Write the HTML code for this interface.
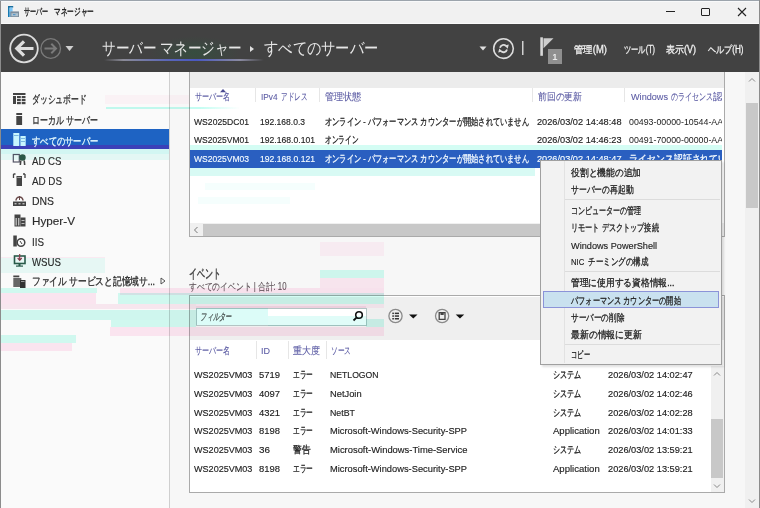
<!DOCTYPE html>
<html><head><meta charset="utf-8">
<style>
*{margin:0;padding:0;box-sizing:border-box}
html,body{width:760px;height:508px;overflow:hidden;background:#f7f7f7}
body{font-family:"Liberation Sans",sans-serif;position:relative;color:#333}
.a{position:absolute;white-space:nowrap}
.fit{overflow:visible}
.fit span{display:inline-block;transform-origin:0 50%}
#win{position:absolute;left:0;top:0;width:760px;height:508px;overflow:hidden;background:#f7f7f7}
</style></head><body>
<div id="win">
<div class="a" style="left:1px;top:1px;width:758px;height:23px;background:#f1f1f1;"></div>
<div class="a" style="left:1px;top:1px;width:758px;height:1px;background:#f8f9fa;"></div>
<div class="a" style="left:1px;top:23px;width:758px;height:1px;background:#fafafa;"></div>
<svg class="a" style="left:7px;top:5px" width="14" height="14" viewBox="0 0 14 14">
<rect x="1" y="1" width="1.6" height="11" fill="#1779b0"/><rect x="1" y="1" width="5.2" height="1.6" fill="#1a6e9e"/>
<rect x="2.6" y="2.6" width="3" height="4.2" fill="#7cc6f6"/><rect x="2.6" y="6.8" width="1.2" height="5.2" fill="#4aa6e4"/>
<rect x="3.4" y="6.4" width="8.6" height="5.6" fill="#7e8e9c"/><rect x="4.4" y="8.2" width="6.6" height="3" fill="#aec2d0"/><rect x="6" y="9" width="2.5" height="1.2" fill="#5a98c8"/></svg>
<div class="a fit" style="left:24.2px;top:5.10px;width:24.2px;height:14px;line-height:14px;font-size:10px;color:#1a1a1a;-webkit-text-stroke:0.35px currentColor"><span>サーバー</span></div>
<div class="a fit" style="left:54.2px;top:5.10px;width:40px;height:14px;line-height:14px;font-size:10px;color:#1a1a1a;-webkit-text-stroke:0.35px currentColor"><span>マネージャー</span></div>
<div class="a" style="left:666px;top:11px;width:9px;height:1px;background:#222;"></div>
<div class="a" style="left:701px;top:8px;width:9px;height:8px;background:transparent;border:1px solid #222;border-radius:1px"></div>
<svg class="a" style="left:737px;top:7px" width="10" height="10" viewBox="0 0 10 10"><path d="M1 1L9 9M9 1L1 9" stroke="#222" stroke-width="1.1"/></svg>
<div class="a" style="left:1px;top:24px;width:758px;height:48px;background:#424242;"></div>
<svg class="a" style="left:8px;top:32px" width="70" height="34" viewBox="0 0 70 34">
<circle cx="16" cy="16.5" r="13.8" fill="none" stroke="#dcdcdc" stroke-width="1.8"/>
<path d="M9 16.5H25.5M16 9.3L8.8 16.5L16 23.7" fill="none" stroke="#dedede" stroke-width="3.2"/>
<circle cx="42.7" cy="16.5" r="9.8" fill="none" stroke="#7a7a7a" stroke-width="1.3"/>
<path d="M36.5 16.5H48M43.3 11.8L48 16.5L43.3 21.2" fill="none" stroke="#7a7a7a" stroke-width="2"/>
<path d="M57.5 14H65.5L61.5 19Z" fill="#d0d0d0"/></svg>
<div class="a" style="left:150px;top:36px;width:90px;height:24px;background:radial-gradient(ellipse at 50% 70%,rgba(40,90,60,.45),rgba(40,90,60,0) 70%);"></div>
<div class="a" style="left:104px;top:58.6px;width:160px;height:2.8px;background:linear-gradient(90deg,rgba(140,140,150,0) 0%,#8a8a96 12%,#5a66b8 40%,#4a58c0 58%,#8a8aa0 85%,rgba(140,140,150,0) 100%);filter:blur(0.4px)"></div>
<div class="a fit" style="left:102px;top:37.00px;width:140px;height:24px;line-height:24px;font-size:17px;color:#e6e6e6;-webkit-text-stroke:0"><span>サーバー マネージャー</span></div>
<svg class="a" style="left:249px;top:45px" width="6" height="8"><path d="M1 1L5 4L1 7Z" fill="#e0e0e0"/></svg>
<div class="a fit" style="left:264px;top:37.00px;width:114px;height:24px;line-height:24px;font-size:17px;color:#e6e6e6;-webkit-text-stroke:0"><span>すべてのサーバー</span></div>
<svg class="a" style="left:478px;top:36px" width="90" height="30" viewBox="0 0 90 30">
<path d="M1.5 10.5H8.5L5 14.5Z" fill="#e0e0e0"/>
<circle cx="25.5" cy="12.6" r="9.8" fill="none" stroke="#dcdcdc" stroke-width="1.6"/>
<path d="M22.0 11.7A3.6 3.6 0 0 1 28.0 10.0M29.0 13.5A3.6 3.6 0 0 1 23.0 15.2" fill="none" stroke="#dcdcdc" stroke-width="1.8"/>
<path d="M26.6 9.6L30.8 8.6L29.7 12.8Z M24.4 15.6L20.2 16.6L21.3 12.4Z" fill="#dcdcdc"/>
<rect x="44" y="5" width="1.5" height="14" fill="#d0d0d0"/>
<rect x="62.3" y="1.3" width="2.6" height="18.5" fill="#d8d8d8"/>
<path d="M65.5 2.3H75.5L65.5 12.3Z" fill="#cdcdcd"/></svg>
<div class="a" style="left:548px;top:49px;width:14px;height:15px;background:#8f8f8f;"></div>
<div class="a" style="left:548px;top:50.30px;height:13px;line-height:13px;font-size:9.5px;color:#f4f4f4;width:14px;text-align:center;-webkit-text-stroke:0.15px currentColor"><span>1</span></div>
<div class="a fit" style="left:574px;top:42.50px;width:33px;height:14px;line-height:14px;font-size:10px;color:#f0f0f0;;-webkit-text-stroke:0.3px currentColor"><span>管理(M)</span></div>
<div class="a fit" style="left:623.6px;top:42.50px;width:31px;height:14px;line-height:14px;font-size:10px;color:#f0f0f0;;-webkit-text-stroke:0.3px currentColor"><span>ツール(T)</span></div>
<div class="a fit" style="left:666.3px;top:42.50px;width:30px;height:14px;line-height:14px;font-size:10px;color:#f0f0f0;;-webkit-text-stroke:0.3px currentColor"><span>表示(V)</span></div>
<div class="a fit" style="left:707.8px;top:42.50px;width:35.5px;height:14px;line-height:14px;font-size:10px;color:#f0f0f0;;-webkit-text-stroke:0.3px currentColor"><span>ヘルプ(H)</span></div>
<div class="a" style="left:1px;top:72px;width:168px;height:436px;background:#fafafa;"></div>
<div class="a" style="left:169px;top:72px;width:1px;height:436px;background:#cfcfcf;"></div>
<div class="a" style="left:1px;top:129px;width:168px;height:16px;background:#1e63c3;"></div>
<div class="a" style="left:1px;top:145px;width:168px;height:4px;background:#3b40b8;"></div>
<div class="a fit" style="left:32.4px;top:92.20px;width:54.5px;height:15px;line-height:15px;font-size:11px;color:#2b2b2b;;-webkit-text-stroke:0.3px currentColor"><span>ダッシュボード</span></div>
<div class="a fit" style="left:32.4px;top:113.00px;width:65.6px;height:15px;line-height:15px;font-size:11px;color:#2b2b2b;;-webkit-text-stroke:0.3px currentColor"><span>ローカル サーバー</span></div>
<div class="a fit" style="left:32.4px;top:133.70px;width:66px;height:15px;line-height:15px;font-size:11px;color:#e8fbff;;-webkit-text-stroke:0.3px currentColor"><span>すべてのサーバー</span></div>
<div class="a fit" style="left:32.4px;top:153.70px;width:29.5px;height:15px;line-height:15px;font-size:11px;color:#2b2b2b;;-webkit-text-stroke:0.15px currentColor"><span>AD CS</span></div>
<div class="a fit" style="left:32.4px;top:173.70px;width:30px;height:15px;line-height:15px;font-size:11px;color:#2b2b2b;;-webkit-text-stroke:0.15px currentColor"><span>AD DS</span></div>
<div class="a fit" style="left:32.4px;top:194.20px;width:22px;height:15px;line-height:15px;font-size:11px;color:#2b2b2b;;-webkit-text-stroke:0.15px currentColor"><span>DNS</span></div>
<div class="a fit" style="left:32.4px;top:214.40px;width:43px;height:15px;line-height:15px;font-size:11px;color:#2b2b2b;;-webkit-text-stroke:0.15px currentColor"><span>Hyper-V</span></div>
<div class="a fit" style="left:32.4px;top:234.70px;width:12px;height:15px;line-height:15px;font-size:11px;color:#2b2b2b;;-webkit-text-stroke:0.15px currentColor"><span>IIS</span></div>
<div class="a fit" style="left:32.4px;top:255.40px;width:29px;height:15px;line-height:15px;font-size:11px;color:#2b2b2b;;-webkit-text-stroke:0.15px currentColor"><span>WSUS</span></div>
<div class="a fit" style="left:32.4px;top:274.20px;width:123px;height:15px;line-height:15px;font-size:11px;color:#2b2b2b;;-webkit-text-stroke:0.3px currentColor"><span>ファイル サービスと記憶域サ...</span></div>
<svg class="a" style="left:12px;top:92px" width="15" height="200" viewBox="0 0 15 200">
<rect x="1" y="1" width="12.5" height="2" fill="#444"/>
<rect x="1" y="4" width="3" height="8" fill="#444"/>
<rect x="5" y="4" width="3.8" height="2.2" fill="#444"/><rect x="9.7" y="4" width="3.8" height="2.2" fill="#444"/>
<rect x="5" y="7" width="3.8" height="2.2" fill="#444"/><rect x="9.7" y="7" width="3.8" height="2.2" fill="#444"/>
<rect x="5" y="10" width="3.8" height="2.2" fill="#444"/><rect x="9.7" y="10" width="3.8" height="2.2" fill="#444"/>
<rect x="4.3" y="21" width="5.8" height="2" fill="#444"/>
<rect x="4.3" y="24" width="5.8" height="9" fill="#444"/>
<rect x="1.3" y="41" width="6" height="13" fill="#c8f6ff"/><rect x="8.4" y="44" width="5.3" height="10" fill="#c8f6ff"/>
<rect x="2" y="43" width="4.6" height="1" fill="#7ab8e0"/><rect x="9" y="46" width="4" height="1" fill="#7ab8e0"/><rect x="9" y="49" width="4" height="1" fill="#7ab8e0"/>
<rect x="1.3" y="62.5" width="6" height="7.5" fill="none" stroke="#556" stroke-width="1.2"/>
<circle cx="10.5" cy="65.5" r="3.2" fill="#2f5a48"/><path d="M8.8 68.5L8.3 73M12.2 68.5L12.7 73" stroke="#444" stroke-width="1.6"/>
<path d="M1.5 82V86M1.5 82H3.5M13 82V86M13 82H11" stroke="#444" stroke-width="1.3" fill="none"/>
<rect x="4.5" y="84" width="5.5" height="10" fill="#444"/><rect x="5.2" y="85" width="4" height="1" fill="#999"/>
<path d="M4 108.5A3.5 3.5 0 0 1 11 108.5" fill="none" stroke="#6a4a4a" stroke-width="1.5"/><rect x="7" y="104" width="1" height="4" fill="#6a4a4a"/>
<rect x="1" y="109.5" width="13" height="4.5" fill="#444"/><rect x="2.5" y="111" width="2" height="1.4" fill="#bbb"/><rect x="6.5" y="111" width="2" height="1.4" fill="#bbb"/><rect x="10.5" y="111" width="2" height="1.4" fill="#bbb"/>
<rect x="2.5" y="122.5" width="6" height="12" fill="#444"/><rect x="8.5" y="125.5" width="5" height="9" fill="#444"/>
<rect x="3.5" y="126" width="1.4" height="7.5" fill="#bbb"/><rect x="6" y="126" width="1.4" height="7.5" fill="#bbb"/><rect x="9.5" y="128" width="3" height="1" fill="#bbb"/><rect x="9.5" y="131" width="3" height="1" fill="#bbb"/>
<rect x="1.3" y="143.5" width="3.5" height="11" fill="#444"/>
<circle cx="9" cy="150.5" r="3.8" fill="none" stroke="#444" stroke-width="1.5"/><path d="M8 149L10 152" stroke="#444" stroke-width="1"/>
<rect x="2.5" y="164" width="10.5" height="7.5" fill="none" stroke="#2a5a4a" stroke-width="1.6"/><rect x="6.5" y="172" width="2" height="2" fill="#2a5a4a"/><rect x="4" y="173.5" width="7" height="1.2" fill="#2a5a4a"/>
<path d="M7.7 162V168M5.7 166L7.7 168.3L9.7 166" stroke="#8a3a4a" stroke-width="1.2" fill="none"/>
<rect x="1.3" y="183.5" width="6" height="1.8" fill="#444"/><rect x="1.3" y="186" width="8" height="9" fill="#666"/>
<rect x="8" y="188" width="5.5" height="8" fill="#333"/><rect x="9" y="189" width="3.5" height="1" fill="#999"/>
</svg>
<svg class="a" style="left:160px;top:277px" width="6" height="8"><path d="M1 1L5 4L1 7Z" fill="none" stroke="#444" stroke-width="0.9"/></svg>
<div class="a" style="left:189px;top:72px;width:536px;height:165px;background:#fff;border:1px solid #aaa;border-top:none"></div>
<div class="a" style="left:190px;top:72px;width:534px;height:16px;background:#ececec;"></div>
<div class="a" style="left:255px;top:88px;width:1px;height:14px;background:#e6e6e6;"></div>
<div class="a" style="left:319px;top:88px;width:1px;height:14px;background:#e6e6e6;"></div>
<div class="a" style="left:532px;top:88px;width:1px;height:14px;background:#e6e6e6;"></div>
<div class="a" style="left:624px;top:88px;width:1px;height:14px;background:#e6e6e6;"></div>
<div class="a" style="left:0;top:0;width:722px;height:508px;overflow:hidden">
<div class="a fit" style="left:194.8px;top:90.00px;width:35.5px;height:14px;line-height:14px;font-size:9.8px;color:#5c5ca4;-webkit-text-stroke:0.1px currentColor"><span>サーバー名</span></div>
<div class="a fit" style="left:261.1px;top:90.00px;width:16.5px;height:14px;line-height:14px;font-size:9.8px;color:#5c5ca4;-webkit-text-stroke:0.1px currentColor"><span>IPv4</span></div>
<div class="a fit" style="left:280.9px;top:90.00px;width:26px;height:14px;line-height:14px;font-size:9.8px;color:#5c5ca4;-webkit-text-stroke:0.1px currentColor"><span>アドレス</span></div>
<div class="a fit" style="left:325.1px;top:90.00px;width:36.3px;height:14px;line-height:14px;font-size:9.8px;color:#5c5ca4;-webkit-text-stroke:0.1px currentColor"><span>管理状態</span></div>
<div class="a fit" style="left:538.3px;top:90.00px;width:44px;height:14px;line-height:14px;font-size:9.8px;color:#5c5ca4;-webkit-text-stroke:0.1px currentColor"><span>前回の更新</span></div>
<div class="a fit" style="left:630.9px;top:90.00px;width:37px;height:14px;line-height:14px;font-size:9.8px;color:#5c5ca4;-webkit-text-stroke:0.1px currentColor"><span>Windows</span></div>
<div class="a fit" style="left:670.6px;top:90.00px;width:42px;height:14px;line-height:14px;font-size:9.8px;color:#5c5ca4;-webkit-text-stroke:0.1px currentColor"><span>のライセンス</span></div>
<div class="a fit" style="left:712.6px;top:90.00px;width:19px;height:14px;line-height:14px;font-size:9.8px;color:#5c5ca4;-webkit-text-stroke:0.1px currentColor"><span>認証</span></div>
</div>
<svg class="a" style="left:219.5px;top:88.5px" width="6" height="4"><path d="M0 3.3L3 0L6 3.3Z" fill="#4a4a90"/></svg>
<div class="a" style="left:190px;top:150px;width:534px;height:18px;background:#2a5fc0;"></div>
<div class="a fit" style="left:193.8px;top:114.80px;width:55px;height:14px;line-height:14px;font-size:9.8px;color:#222;;-webkit-text-stroke:0.15px currentColor"><span>WS2025DC01</span></div>
<div class="a fit" style="left:260.3px;top:114.80px;width:45px;height:14px;line-height:14px;font-size:9.8px;color:#222;;-webkit-text-stroke:0.15px currentColor"><span>192.168.0.3</span></div>
<div class="a fit" style="left:324.6px;top:114.80px;width:204px;height:14px;line-height:14px;font-size:9.8px;color:#222;;-webkit-text-stroke:0.3px currentColor"><span>オンライン - パフォーマンス カウンターが開始されていません</span></div>
<div class="a fit" style="left:537px;top:114.80px;width:84.5px;height:14px;line-height:14px;font-size:9.8px;color:#222;;-webkit-text-stroke:0.15px currentColor"><span>2026/03/02 14:48:48</span></div>
<div class="a" style="left:0;top:0;width:722px;height:508px;overflow:hidden">
<div class="a" style="left:629px;top:114.80px;height:14px;line-height:14px;font-size:9.8px;color:#222;"><span style="display:inline-block;transform-origin:0 50%;transform:scaleX(0.9)">00493-00000-10544-AA</span></div>
</div>
<div class="a fit" style="left:193.8px;top:133.20px;width:55px;height:14px;line-height:14px;font-size:9.8px;color:#222;;-webkit-text-stroke:0.15px currentColor"><span>WS2025VM01</span></div>
<div class="a fit" style="left:260.3px;top:133.20px;width:55px;height:14px;line-height:14px;font-size:9.8px;color:#222;;-webkit-text-stroke:0.15px currentColor"><span>192.168.0.101</span></div>
<div class="a fit" style="left:324.6px;top:133.20px;width:33.5px;height:14px;line-height:14px;font-size:9.8px;color:#222;;-webkit-text-stroke:0.3px currentColor"><span>オンライン</span></div>
<div class="a fit" style="left:537px;top:133.20px;width:84.5px;height:14px;line-height:14px;font-size:9.8px;color:#222;;-webkit-text-stroke:0.15px currentColor"><span>2026/03/02 14:46:23</span></div>
<div class="a" style="left:0;top:0;width:722px;height:508px;overflow:hidden">
<div class="a" style="left:629px;top:133.20px;height:14px;line-height:14px;font-size:9.8px;color:#222;"><span style="display:inline-block;transform-origin:0 50%;transform:scaleX(0.9)">00491-70000-00000-AA</span></div>
</div>
<div class="a fit" style="left:193.8px;top:151.70px;width:55px;height:14px;line-height:14px;font-size:9.8px;color:#f4fbff;;-webkit-text-stroke:0.15px currentColor"><span>WS2025VM03</span></div>
<div class="a fit" style="left:260.3px;top:151.70px;width:55px;height:14px;line-height:14px;font-size:9.8px;color:#f4fbff;;-webkit-text-stroke:0.15px currentColor"><span>192.168.0.121</span></div>
<div class="a fit" style="left:324.6px;top:151.70px;width:204px;height:14px;line-height:14px;font-size:9.8px;color:#f4fbff;;-webkit-text-stroke:0.3px currentColor"><span>オンライン - パフォーマンス カウンターが開始されていません</span></div>
<div class="a fit" style="left:537px;top:151.70px;width:84.5px;height:14px;line-height:14px;font-size:9.8px;color:#f4fbff;;-webkit-text-stroke:0.15px currentColor"><span>2026/03/02 14:48:47</span></div>
<div class="a" style="left:0;top:0;width:722px;height:508px;overflow:hidden">
<div class="a fit" style="left:629px;top:151.70px;width:125px;height:14px;line-height:14px;font-size:9.8px;color:#f4fbff;;-webkit-text-stroke:0.3px currentColor"><span>ライセンス認証されていません</span></div>
</div>
<div class="a" style="left:722px;top:88px;width:2px;height:135px;background:#fff;"></div>
<div class="a" style="left:190px;top:223px;width:534px;height:13px;background:#f0f0f0;"></div>
<div class="a" style="left:203px;top:224px;width:519px;height:12px;background:#c8c8c8;"></div>
<svg class="a" style="left:193px;top:226px" width="6" height="8"><path d="M4.5 1L1.5 4L4.5 7" fill="none" stroke="#777" stroke-width="1"/></svg>
<div class="a fit" style="left:189px;top:265.20px;width:32px;height:18px;line-height:18px;font-size:13px;color:#444;-webkit-text-stroke:0.45px currentColor"><span>イベント</span></div>
<div class="a fit" style="left:188.8px;top:280.00px;width:97.5px;height:14px;line-height:14px;font-size:10px;color:#5e5258;-webkit-text-stroke:0.1px currentColor"><span>すべてのイベント | 合計: 10</span></div>
<div class="a" style="left:189px;top:295px;width:536px;height:198px;background:#fff;border:1px solid #aaa"></div>
<div class="a" style="left:190px;top:297px;width:534px;height:43px;background:#efefef;"></div>
<div class="a" style="left:196px;top:307.5px;width:170.5px;height:18px;background:#fff;border:1px solid #b4c4c4"></div>
<div class="a" style="left:0;top:0;width:760px;height:508px;transform-origin:200px 317px;transform:skewX(-12deg)">
<div class="a fit" style="left:200.5px;top:310.00px;width:33px;height:14px;line-height:14px;font-size:9.8px;color:#555;;-webkit-text-stroke:0.3px currentColor"><span>フィルター</span></div>
</div>
<svg class="a" style="left:352px;top:310px" width="12" height="12" viewBox="0 0 12 12"><circle cx="7" cy="5" r="3.3" fill="none" stroke="#111" stroke-width="1.6"/><path d="M4.7 7.3L1.5 10.5" stroke="#111" stroke-width="1.8"/></svg>
<svg class="a" style="left:385px;top:307px" width="85" height="19" viewBox="0 0 85 19">
<circle cx="10.5" cy="9" r="6.6" fill="none" stroke="#8a8a8a" stroke-width="1.3"/>
<rect x="7.3" y="5.6" width="1.6" height="1.5" fill="#333"/><rect x="7.3" y="8.3" width="1.6" height="1.5" fill="#333"/><rect x="7.3" y="11" width="1.6" height="1.5" fill="#333"/>
<rect x="9.8" y="5.6" width="4.2" height="1.5" fill="#333"/><rect x="9.8" y="8.3" width="4.2" height="1.5" fill="#333"/><rect x="9.8" y="11" width="4.2" height="1.5" fill="#333"/>
<path d="M24 7.5H32.5L28.25 11.5Z" fill="#111"/>
<circle cx="57.1" cy="9" r="6.6" fill="none" stroke="#8a8a8a" stroke-width="1.3"/>
<path d="M54.2 5.6H60V12.4H54.2Z" fill="none" stroke="#444" stroke-width="1.3"/><rect x="55.5" y="5.4" width="3.2" height="2.6" fill="#444"/>
<path d="M70.7 7.5H79.2L74.95 11.5Z" fill="#111"/></svg>
<div class="a" style="left:256px;top:341px;width:1px;height:18px;background:#e6e6e6;"></div>
<div class="a" style="left:288px;top:341px;width:1px;height:18px;background:#e6e6e6;"></div>
<div class="a" style="left:326px;top:341px;width:1px;height:18px;background:#e6e6e6;"></div>
<div class="a fit" style="left:194.9px;top:343.70px;width:35.4px;height:14px;line-height:14px;font-size:9.8px;color:#5c5ca4;-webkit-text-stroke:0.1px currentColor"><span>サーバー名</span></div>
<div class="a fit" style="left:261.1px;top:343.70px;width:9px;height:14px;line-height:14px;font-size:9.8px;color:#5c5ca4;-webkit-text-stroke:0.1px currentColor"><span>ID</span></div>
<div class="a fit" style="left:293.4px;top:343.70px;width:26.8px;height:14px;line-height:14px;font-size:9.8px;color:#5c5ca4;-webkit-text-stroke:0.1px currentColor"><span>重大度</span></div>
<div class="a fit" style="left:330.5px;top:343.70px;width:20px;height:14px;line-height:14px;font-size:9.8px;color:#5c5ca4;-webkit-text-stroke:0.1px currentColor"><span>ソース</span></div>
<div class="a fit" style="left:193.8px;top:367.70px;width:58.4px;height:14px;line-height:14px;font-size:9.8px;color:#222;;-webkit-text-stroke:0.15px currentColor"><span>WS2025VM03</span></div>
<div class="a fit" style="left:259px;top:367.70px;width:21px;height:14px;line-height:14px;font-size:9.8px;color:#222;;-webkit-text-stroke:0.15px currentColor"><span>5719</span></div>
<div class="a fit" style="left:292.5px;top:367.70px;width:20px;height:14px;line-height:14px;font-size:9.8px;color:#222;;-webkit-text-stroke:0.3px currentColor"><span>エラー</span></div>
<div class="a fit" style="left:330px;top:367.70px;width:48.6px;height:14px;line-height:14px;font-size:9.8px;color:#222;;-webkit-text-stroke:0.15px currentColor"><span>NETLOGON</span></div>
<div class="a fit" style="left:553px;top:367.70px;width:28.3px;height:14px;line-height:14px;font-size:9.8px;color:#222;;-webkit-text-stroke:0.3px currentColor"><span>システム</span></div>
<div class="a fit" style="left:607.9px;top:367.70px;width:84.7px;height:14px;line-height:14px;font-size:9.8px;color:#222;;-webkit-text-stroke:0.15px currentColor"><span>2026/03/02 14:02:47</span></div>
<div class="a fit" style="left:193.8px;top:386.90px;width:58.4px;height:14px;line-height:14px;font-size:9.8px;color:#222;;-webkit-text-stroke:0.15px currentColor"><span>WS2025VM03</span></div>
<div class="a fit" style="left:259px;top:386.90px;width:21px;height:14px;line-height:14px;font-size:9.8px;color:#222;;-webkit-text-stroke:0.15px currentColor"><span>4097</span></div>
<div class="a fit" style="left:292.5px;top:386.90px;width:20px;height:14px;line-height:14px;font-size:9.8px;color:#222;;-webkit-text-stroke:0.3px currentColor"><span>エラー</span></div>
<div class="a fit" style="left:330px;top:386.90px;width:31.6px;height:14px;line-height:14px;font-size:9.8px;color:#222;;-webkit-text-stroke:0.15px currentColor"><span>NetJoin</span></div>
<div class="a fit" style="left:553px;top:386.90px;width:28.3px;height:14px;line-height:14px;font-size:9.8px;color:#222;;-webkit-text-stroke:0.3px currentColor"><span>システム</span></div>
<div class="a fit" style="left:607.9px;top:386.90px;width:84.7px;height:14px;line-height:14px;font-size:9.8px;color:#222;;-webkit-text-stroke:0.15px currentColor"><span>2026/03/02 14:02:46</span></div>
<div class="a fit" style="left:193.8px;top:405.70px;width:58.4px;height:14px;line-height:14px;font-size:9.8px;color:#222;;-webkit-text-stroke:0.15px currentColor"><span>WS2025VM03</span></div>
<div class="a fit" style="left:259px;top:405.70px;width:21px;height:14px;line-height:14px;font-size:9.8px;color:#222;;-webkit-text-stroke:0.15px currentColor"><span>4321</span></div>
<div class="a fit" style="left:292.5px;top:405.70px;width:20px;height:14px;line-height:14px;font-size:9.8px;color:#222;;-webkit-text-stroke:0.3px currentColor"><span>エラー</span></div>
<div class="a fit" style="left:330px;top:405.70px;width:25px;height:14px;line-height:14px;font-size:9.8px;color:#222;;-webkit-text-stroke:0.15px currentColor"><span>NetBT</span></div>
<div class="a fit" style="left:553px;top:405.70px;width:28.3px;height:14px;line-height:14px;font-size:9.8px;color:#222;;-webkit-text-stroke:0.3px currentColor"><span>システム</span></div>
<div class="a fit" style="left:607.9px;top:405.70px;width:84.7px;height:14px;line-height:14px;font-size:9.8px;color:#222;;-webkit-text-stroke:0.15px currentColor"><span>2026/03/02 14:02:28</span></div>
<div class="a fit" style="left:193.8px;top:424.10px;width:58.4px;height:14px;line-height:14px;font-size:9.8px;color:#222;;-webkit-text-stroke:0.15px currentColor"><span>WS2025VM03</span></div>
<div class="a fit" style="left:259px;top:424.10px;width:21px;height:14px;line-height:14px;font-size:9.8px;color:#222;;-webkit-text-stroke:0.15px currentColor"><span>8198</span></div>
<div class="a fit" style="left:292.5px;top:424.10px;width:20px;height:14px;line-height:14px;font-size:9.8px;color:#222;;-webkit-text-stroke:0.3px currentColor"><span>エラー</span></div>
<div class="a fit" style="left:330px;top:424.10px;width:137px;height:14px;line-height:14px;font-size:9.8px;color:#222;;-webkit-text-stroke:0.15px currentColor"><span>Microsoft-Windows-Security-SPP</span></div>
<div class="a fit" style="left:553px;top:424.10px;width:46.7px;height:14px;line-height:14px;font-size:9.8px;color:#222;;-webkit-text-stroke:0.15px currentColor"><span>Application</span></div>
<div class="a fit" style="left:607.9px;top:424.10px;width:84.7px;height:14px;line-height:14px;font-size:9.8px;color:#222;;-webkit-text-stroke:0.15px currentColor"><span>2026/03/02 14:01:33</span></div>
<div class="a fit" style="left:193.8px;top:443.30px;width:58.4px;height:14px;line-height:14px;font-size:9.8px;color:#222;;-webkit-text-stroke:0.15px currentColor"><span>WS2025VM03</span></div>
<div class="a fit" style="left:259px;top:443.30px;width:11px;height:14px;line-height:14px;font-size:9.8px;color:#222;;-webkit-text-stroke:0.15px currentColor"><span>36</span></div>
<div class="a fit" style="left:292.5px;top:443.30px;width:17.5px;height:14px;line-height:14px;font-size:9.8px;color:#222;;-webkit-text-stroke:0.3px currentColor"><span>警告</span></div>
<div class="a fit" style="left:330px;top:443.30px;width:137.4px;height:14px;line-height:14px;font-size:9.8px;color:#222;;-webkit-text-stroke:0.15px currentColor"><span>Microsoft-Windows-Time-Service</span></div>
<div class="a fit" style="left:553px;top:443.30px;width:28.3px;height:14px;line-height:14px;font-size:9.8px;color:#222;;-webkit-text-stroke:0.3px currentColor"><span>システム</span></div>
<div class="a fit" style="left:607.9px;top:443.30px;width:84.7px;height:14px;line-height:14px;font-size:9.8px;color:#222;;-webkit-text-stroke:0.15px currentColor"><span>2026/03/02 13:59:21</span></div>
<div class="a fit" style="left:193.8px;top:462.00px;width:58.4px;height:14px;line-height:14px;font-size:9.8px;color:#222;;-webkit-text-stroke:0.15px currentColor"><span>WS2025VM03</span></div>
<div class="a fit" style="left:259px;top:462.00px;width:21px;height:14px;line-height:14px;font-size:9.8px;color:#222;;-webkit-text-stroke:0.15px currentColor"><span>8198</span></div>
<div class="a fit" style="left:292.5px;top:462.00px;width:20px;height:14px;line-height:14px;font-size:9.8px;color:#222;;-webkit-text-stroke:0.3px currentColor"><span>エラー</span></div>
<div class="a fit" style="left:330px;top:462.00px;width:137px;height:14px;line-height:14px;font-size:9.8px;color:#222;;-webkit-text-stroke:0.15px currentColor"><span>Microsoft-Windows-Security-SPP</span></div>
<div class="a fit" style="left:553px;top:462.00px;width:46.7px;height:14px;line-height:14px;font-size:9.8px;color:#222;;-webkit-text-stroke:0.15px currentColor"><span>Application</span></div>
<div class="a fit" style="left:607.9px;top:462.00px;width:84.7px;height:14px;line-height:14px;font-size:9.8px;color:#222;;-webkit-text-stroke:0.15px currentColor"><span>2026/03/02 13:59:21</span></div>
<div class="a" style="left:711px;top:366px;width:13px;height:126px;background:#f0f0f0;"></div>
<div class="a" style="left:711px;top:419px;width:12px;height:59px;background:#c8c8c8;"></div>
<svg class="a" style="left:713px;top:371px" width="8" height="6"><path d="M1 4.5L4 1.5L7 4.5" fill="none" stroke="#888" stroke-width="1"/></svg>
<svg class="a" style="left:713px;top:483px" width="8" height="6"><path d="M1 1.5L4 4.5L7 1.5" fill="none" stroke="#888" stroke-width="1"/></svg>
<div class="a" style="left:1px;top:148.5px;width:168px;height:5.5px;background:#cdfaf5;mix-blend-mode:multiply;opacity:0.8"></div>
<div class="a" style="left:1px;top:154px;width:168px;height:6px;background:#e2fcf8;mix-blend-mode:multiply;opacity:0.8"></div>
<div class="a" style="left:190px;top:144.5px;width:532px;height:5.5px;background:#cafdf2;mix-blend-mode:multiply;opacity:0.8"></div>
<div class="a" style="left:196px;top:303.5px;width:188px;height:4.0px;background:#ffe4f1;mix-blend-mode:multiply;opacity:0.5"></div>
<div class="a" style="left:190px;top:167.5px;width:345px;height:8.3px;background:#cff9f2;mix-blend-mode:multiply;opacity:0.8"></div>
<div class="a" style="left:205px;top:183px;width:110px;height:7px;background:#d8fcf6;mix-blend-mode:multiply;opacity:0.25"></div>
<div class="a" style="left:198px;top:197px;width:92px;height:7px;background:#d8fcf6;mix-blend-mode:multiply;opacity:0.25"></div>
<div class="a" style="left:106px;top:106.5px;width:134px;height:2.5px;background:linear-gradient(90deg,#c4fdf2,#c4fdf2 70%,rgba(196,253,242,0));mix-blend-mode:multiply"></div>
<div class="a" style="left:105px;top:95px;width:84px;height:9px;background:#fff0f6;mix-blend-mode:multiply;opacity:0.5"></div>
<div class="a" style="left:1px;top:288px;width:96px;height:5.4px;background:#cafdf2;mix-blend-mode:multiply;opacity:0.8"></div>
<div class="a" style="left:1px;top:293.4px;width:95px;height:10.3px;background:#ffe4f1;mix-blend-mode:multiply;opacity:0.8"></div>
<div class="a" style="left:120px;top:288px;width:264px;height:7px;background:#ffe4f1;mix-blend-mode:multiply;opacity:0.8"></div>
<div class="a" style="left:118px;top:293.4px;width:266px;height:10.3px;background:#cafdf2;mix-blend-mode:multiply;opacity:0.8"></div>
<div class="a" style="left:1px;top:303.7px;width:195px;height:5.6px;background:#fbe6f0;mix-blend-mode:multiply;opacity:0.8"></div>
<div class="a" style="left:196px;top:305.5px;width:170px;height:2.1px;background:#fbe6f0;mix-blend-mode:multiply;opacity:0.8"></div>
<div class="a" style="left:1px;top:309.5px;width:195px;height:10.8px;background:#c8faf0;mix-blend-mode:multiply;opacity:0.8"></div>
<div class="a" style="left:110.5px;top:320.3px;width:85.5px;height:7.1px;background:#cafdf2;mix-blend-mode:multiply;opacity:0.8"></div>
<div class="a" style="left:196px;top:307.8px;width:72px;height:17.7px;background:#d4fcf6;mix-blend-mode:multiply;opacity:0.8"></div>
<div class="a" style="left:268px;top:316px;width:98px;height:9.5px;background:#d8fbf6;mix-blend-mode:multiply;opacity:0.8"></div>
<div class="a" style="left:366px;top:319px;width:18px;height:8.4px;background:#c8faf0;mix-blend-mode:multiply;opacity:0.8"></div>
<div class="a" style="left:110px;top:327.4px;width:274px;height:8.4px;background:#ffe4f1;mix-blend-mode:multiply;opacity:0.8"></div>
<div class="a" style="left:1px;top:335.3px;width:75px;height:7.9px;background:#cafdf2;mix-blend-mode:multiply;opacity:0.8"></div>
<div class="a" style="left:1px;top:343.2px;width:71px;height:7.8px;background:#ffe4f1;mix-blend-mode:multiply;opacity:0.8"></div>
<div class="a" style="left:320px;top:242px;width:64px;height:14px;background:#ffe4f1;mix-blend-mode:multiply;opacity:0.45"></div>
<div class="a" style="left:320px;top:270px;width:64px;height:8px;background:#cafdf2;mix-blend-mode:multiply;opacity:0.8"></div>
<div class="a" style="left:320px;top:278px;width:64px;height:10px;background:#ffe4f1;mix-blend-mode:multiply;opacity:0.7"></div>
<div class="a" style="left:1px;top:256.5px;width:104px;height:1.5px;background:#ffe4f1;mix-blend-mode:multiply;opacity:0.6"></div>
<div class="a" style="left:1px;top:258px;width:104px;height:14.8px;background:#e6fcf8;mix-blend-mode:multiply;opacity:0.8"></div>
<div class="a" style="left:745px;top:72px;width:14px;height:436px;background:#f0f0f0;"></div>
<div class="a" style="left:746px;top:103px;width:12px;height:105px;background:#c8c8c8;"></div>
<svg class="a" style="left:748px;top:77px" width="8" height="6"><path d="M1 4.5L4 1.5L7 4.5" fill="none" stroke="#888" stroke-width="1"/></svg>
<svg class="a" style="left:748px;top:498px" width="8" height="6"><path d="M1 1.5L4 4.5L7 1.5" fill="none" stroke="#888" stroke-width="1"/></svg>
<div class="a" style="left:540px;top:160px;width:182px;height:205px;background:#f2f2f2;border:1px solid #a0a0a0;box-shadow:2px 2px 2px rgba(0,0,0,.12)"></div>
<div class="a" style="left:564px;top:161px;width:1px;height:202px;background:#e2e2e2;"></div>
<div class="a" style="left:543px;top:290.5px;width:176px;height:17px;background:#c9e1ef;border:1px solid #8b93d8"></div>
<div class="a" style="left:565px;top:199px;width:155px;height:1px;background:#dcdcdc;"></div>
<div class="a" style="left:565px;top:271px;width:155px;height:1px;background:#dcdcdc;"></div>
<div class="a" style="left:565px;top:344px;width:155px;height:1px;background:#dcdcdc;"></div>
<div class="a fit" style="left:570.7px;top:166.20px;width:70px;height:14px;line-height:14px;font-size:9.8px;color:#222;;-webkit-text-stroke:0.3px currentColor"><span>役割と機能の追加</span></div>
<div class="a fit" style="left:570.7px;top:182.90px;width:62.6px;height:14px;line-height:14px;font-size:9.8px;color:#222;;-webkit-text-stroke:0.3px currentColor"><span>サーバーの再起動</span></div>
<div class="a fit" style="left:570.7px;top:203.90px;width:70.3px;height:14px;line-height:14px;font-size:9.8px;color:#222;;-webkit-text-stroke:0.3px currentColor"><span>コンピューターの管理</span></div>
<div class="a fit" style="left:570.7px;top:220.50px;width:87.8px;height:14px;line-height:14px;font-size:9.8px;color:#222;;-webkit-text-stroke:0.3px currentColor"><span>リモート デスクトップ接続</span></div>
<div class="a fit" style="left:570.7px;top:239.10px;width:86.1px;height:14px;line-height:14px;font-size:9.8px;color:#222;;-webkit-text-stroke:0.15px currentColor"><span>Windows PowerShell</span></div>
<div class="a fit" style="left:570.7px;top:255.00px;width:13.4px;height:14px;line-height:14px;font-size:9.8px;color:#222;;-webkit-text-stroke:0.15px currentColor"><span>NIC</span></div>
<div class="a fit" style="left:570.7px;top:276.20px;width:103.3px;height:14px;line-height:14px;font-size:9.8px;color:#222;;-webkit-text-stroke:0.3px currentColor"><span>管理に使用する資格情報...</span></div>
<div class="a fit" style="left:570.7px;top:294.20px;width:109.8px;height:14px;line-height:14px;font-size:9.8px;color:#222;;-webkit-text-stroke:0.3px currentColor"><span>パフォーマンス カウンターの開始</span></div>
<div class="a fit" style="left:570.7px;top:310.80px;width:53.3px;height:14px;line-height:14px;font-size:9.8px;color:#222;;-webkit-text-stroke:0.3px currentColor"><span>サーバーの削除</span></div>
<div class="a fit" style="left:570.7px;top:327.50px;width:70.8px;height:14px;line-height:14px;font-size:9.8px;color:#222;;-webkit-text-stroke:0.3px currentColor"><span>最新の情報に更新</span></div>
<div class="a fit" style="left:570.7px;top:348.00px;width:18.8px;height:14px;line-height:14px;font-size:9.8px;color:#222;;-webkit-text-stroke:0.3px currentColor"><span>コピー</span></div>
<div class="a fit" style="left:587.9px;top:255.00px;width:60px;height:14px;line-height:14px;font-size:9.8px;color:#222;;-webkit-text-stroke:0.3px currentColor"><span>チーミングの構成</span></div>
<div class="a" style="left:0px;top:0px;width:1px;height:508px;background:#8c8c8c;"></div>
<div class="a" style="left:0px;top:0px;width:760px;height:1px;background:#9ca4ac;"></div>
<div class="a" style="left:759px;top:0px;width:1px;height:508px;background:#8c8c8c;"></div>
</div>
<script>
(function(){
var els=document.querySelectorAll('.fit');
for(var i=0;i<els.length;i++){
 var e=els[i], s=e.firstElementChild, w=parseFloat(e.style.width);
 var r=s.getBoundingClientRect().width;
 if(r>0&&w>0){ s.style.transform='scaleX('+(w/r)+')'; }
}
})();
</script>
</body></html>
